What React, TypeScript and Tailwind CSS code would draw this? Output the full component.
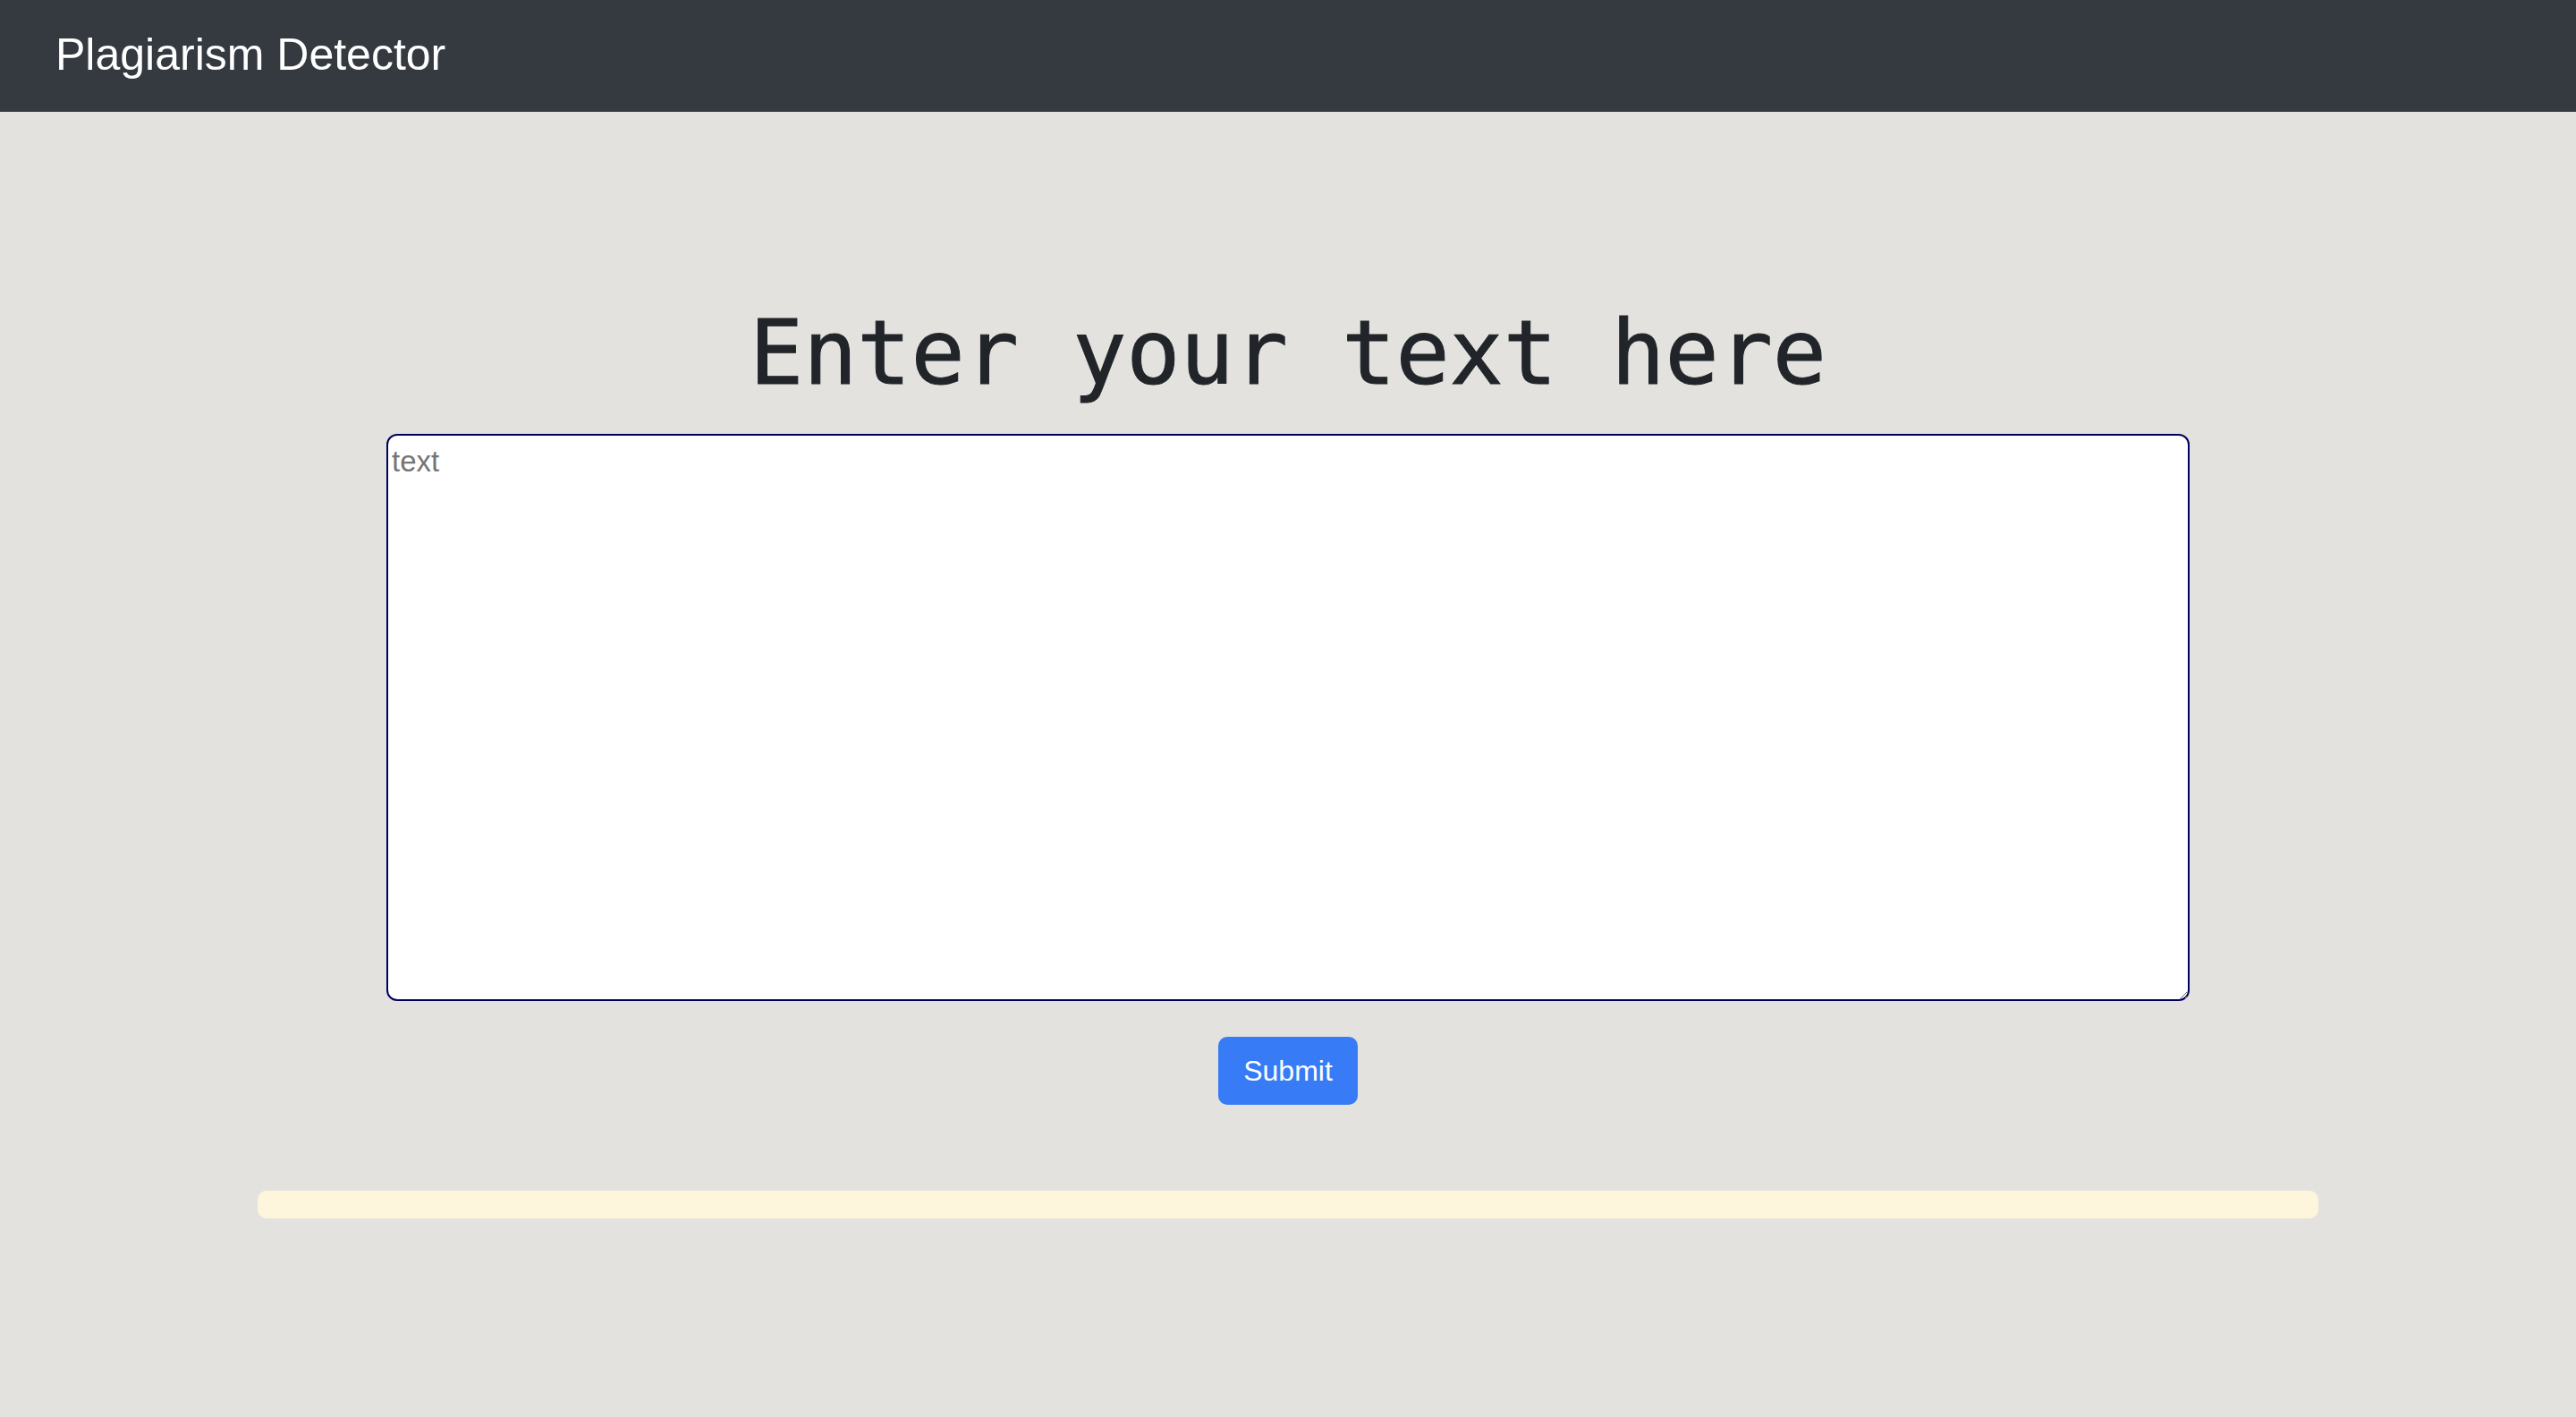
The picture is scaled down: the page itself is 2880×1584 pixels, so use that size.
import React from "react";

export default function App() {
  return (
    <div className="min-h-[1584px] w-full bg-[#e3e2de]" style={{ fontFamily: '"Liberation Sans", Arial, sans-serif' }}>
      <nav className="h-[125px] bg-[#343a40] flex items-center px-[62px] pb-[3px]">
        <span className="text-white text-[50px] leading-none" style={{ fontFamily: '"Liberation Sans", Arial, sans-serif' }}>
          Plagiarism Detector
        </span>
      </nav>
      <main className="flex flex-col items-center">
        <h1
          className="mt-[210px] text-[100px] leading-[120px] text-[#212529] font-normal [-webkit-text-stroke:1px_#212529]"
          style={{ fontFamily: '"DejaVu Sans Mono", monospace' }}
        >
          Enter your text here
        </h1>
        <textarea
          placeholder="text"
          className="mt-[30px] w-[2016px] h-[634px] border-2 border-[#00005e] rounded-[12px] bg-white pl-[4px] pr-[4px] pt-[10px] pb-[4px] text-[33px] leading-[38px] text-[#212529] placeholder:text-[#757575] outline-none"
          style={{ fontFamily: '"Liberation Sans", Arial, sans-serif' }}
        />
        <button className="mt-[40px] h-[76px] px-[28px] rounded-[10px] bg-[#377cf6] text-white text-[32px] leading-[48px]">
          Submit
        </button>
        <div className="mt-[96px] w-[2304px] h-[31px] rounded-[10px] bg-[#fdf6dc]" />
      </main>
    </div>
  );
}
